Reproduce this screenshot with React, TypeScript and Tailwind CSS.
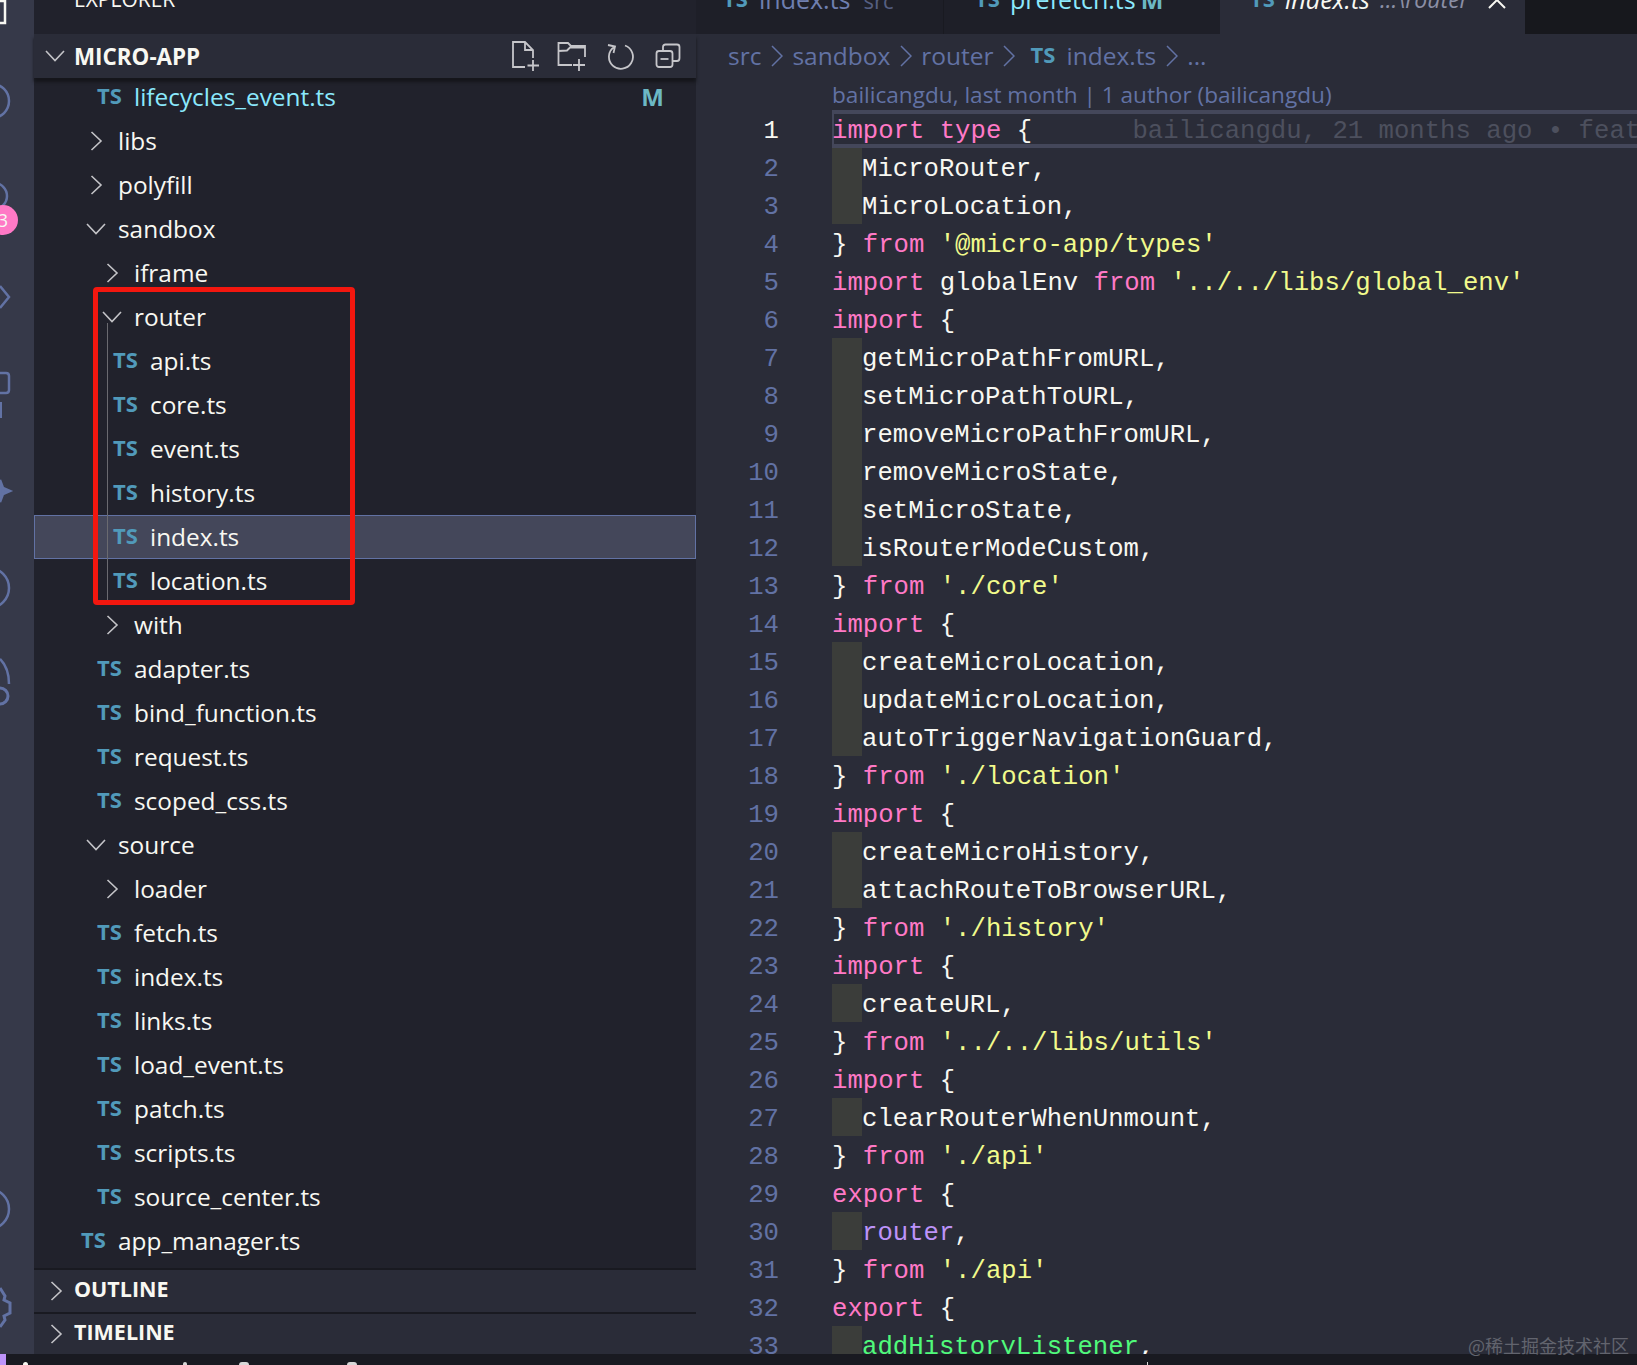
import React from 'react';

type TreeRow = {
  name: string;
  kind: 'file' | 'open' | 'closed';
  depth: number;
  modified?: boolean;
  selected?: boolean;
};

const tree: TreeRow[] = [
  { name: 'lifecycles_event.ts', kind: 'file', depth: 1, modified: true },
  { name: 'libs', kind: 'closed', depth: 0 },
  { name: 'polyfill', kind: 'closed', depth: 0 },
  { name: 'sandbox', kind: 'open', depth: 0 },
  { name: 'iframe', kind: 'closed', depth: 1 },
  { name: 'router', kind: 'open', depth: 1 },
  { name: 'api.ts', kind: 'file', depth: 2 },
  { name: 'core.ts', kind: 'file', depth: 2 },
  { name: 'event.ts', kind: 'file', depth: 2 },
  { name: 'history.ts', kind: 'file', depth: 2 },
  { name: 'index.ts', kind: 'file', depth: 2, selected: true },
  { name: 'location.ts', kind: 'file', depth: 2 },
  { name: 'with', kind: 'closed', depth: 1 },
  { name: 'adapter.ts', kind: 'file', depth: 1 },
  { name: 'bind_function.ts', kind: 'file', depth: 1 },
  { name: 'request.ts', kind: 'file', depth: 1 },
  { name: 'scoped_css.ts', kind: 'file', depth: 1 },
  { name: 'source', kind: 'open', depth: 0 },
  { name: 'loader', kind: 'closed', depth: 1 },
  { name: 'fetch.ts', kind: 'file', depth: 1 },
  { name: 'index.ts', kind: 'file', depth: 1 },
  { name: 'links.ts', kind: 'file', depth: 1 },
  { name: 'load_event.ts', kind: 'file', depth: 1 },
  { name: 'patch.ts', kind: 'file', depth: 1 },
  { name: 'scripts.ts', kind: 'file', depth: 1 },
  { name: 'source_center.ts', kind: 'file', depth: 1 },
  { name: 'app_manager.ts', kind: 'file', depth: 0 },
];

const code = [
  'import type {',
  '  MicroRouter,',
  '  MicroLocation,',
  "} from '@micro-app/types'",
  "import globalEnv from '../../libs/global_env'",
  'import {',
  '  getMicroPathFromURL,',
  '  setMicroPathToURL,',
  '  removeMicroPathFromURL,',
  '  removeMicroState,',
  '  setMicroState,',
  '  isRouterModeCustom,',
  "} from './core'",
  'import {',
  '  createMicroLocation,',
  '  updateMicroLocation,',
  '  autoTriggerNavigationGuard,',
  "} from './location'",
  'import {',
  '  createMicroHistory,',
  '  attachRouteToBrowserURL,',
  "} from './history'",
  'import {',
  '  createURL,',
  "} from '../../libs/utils'",
  'import {',
  '  clearRouterWhenUnmount,',
  "} from './api'",
  'export {',
  '  router,',
  "} from './api'",
  'export {',
  '  addHistoryListener,',
];

const fileIndent = ['pl-[47px]', 'pl-[63px]', 'pl-[79px]'];
const folderIndent = ['pl-[52px]', 'pl-[68px]', 'pl-[84px]'];

const TsBadge = ({ className = '' }: { className?: string }) => (
  <span className={`font-bold text-[#519aba] text-[22px] leading-none -translate-y-[2px] ${className}`}>TS</span>
);

const Chevron = ({ open, className = '' }: { open: boolean; className?: string }) => (
  <svg viewBox="0 0 20 20" className={`w-5 h-5 shrink-0 ${className}`} fill="none" stroke="#c4c4c8" strokeWidth="1.6">
    {open ? <path d="M1 5 L10 14.5 L19 5" /> : <path d="M5.5 1 L15 10 L5.5 19" />}
  </svg>
);

const Row = ({ row }: { row: TreeRow }) => {
  const base = 'h-[44px] flex items-center text-[24.4px] leading-none';
  if (row.kind === 'file') {
    return (
      <div
        className={`${base} ${fileIndent[row.depth]} ${
          row.selected ? 'bg-[#44475a] outline outline-1 -outline-offset-1 outline-[#6272a4]' : ''
        }`}
      >
        <TsBadge className="w-[37px] shrink-0" />
        <span className={row.modified ? 'text-[#8be9fd]' : 'text-[#f8f8f2]'}>{row.name}</span>
        {row.modified && <span className="ml-auto mr-[32px] font-bold text-[24px] text-[#6cb8c4]">M</span>}
      </div>
    );
  }
  return (
    <div className={`${base} ${folderIndent[row.depth]} text-[#f8f8f2]`}>
      <Chevron open={row.kind === 'open'} className="mr-[12px]" />
      <span>{row.name}</span>
    </div>
  );
};

const SectionHeader = ({ title, height, line }: { title: string; height: string; line?: boolean }) => (
  <div
    className={`${height} ${line ? 'border-t-2 border-[#191a21]' : ''} bg-[#2a2c38] flex items-center pl-[12px] shrink-0`}
  >
    <Chevron open={false} className="mr-[8px]" />
    <span className="font-bold text-[21.5px] text-[#f8f8f2] pb-[4px]">{title}</span>
  </div>
);

const ToolbarIcons = () => (
  <div className="ml-auto mr-[15px] flex items-center">
    <svg viewBox="0 0 30 30" className="w-[30px] h-[30px] mr-[16px]" fill="none" stroke="#c6c6ca" strokeWidth="1.8">
      <path d="M14 26 H2 V1 H14 L22 9 V17 M14 1 V9 H22" />
      <path d="M22 19 V30 M16.5 24.5 H28" />
    </svg>
    <svg viewBox="0 0 30 30" className="w-[30px] h-[30px] mr-[19px]" fill="none" stroke="#c6c6ca" strokeWidth="1.8">
      <path d="M15 24 H1.5 V2 H11 L14 5 H28 V16 M1.5 10 L10 9.5 L13 6.5 H28" />
      <path d="M22 18 V30 M16 24 H28" />
    </svg>
    <svg viewBox="0 0 28 28" className="w-[28px] h-[28px] mr-[21px]" fill="none" stroke="#c6c6ca" strokeWidth="1.8">
      <path d="M8 5 A12 12 0 1 0 19 3.5 M2 3 L9 4.5 L7.5 11" />
    </svg>
    <svg viewBox="0 0 26 26" className="w-[26px] h-[26px]" fill="none" stroke="#c6c6ca" strokeWidth="1.8">
      <rect x="1.5" y="8" width="16" height="16" rx="2.5" />
      <path d="M8 8 V4 Q8 1.5 10.5 1.5 H22 Q24.5 1.5 24.5 4 V15 Q24.5 18 22 18 H17.5" />
      <path d="M5.5 16 H13.5" />
    </svg>
  </div>
);

const Sidebar = () => (
  <div className="w-[662px] shrink-0 bg-[#21222c] flex flex-col relative">
    <div className="h-[34px] shrink-0 pl-[40px] overflow-hidden">
      <div className="text-[21px] leading-none text-[#f8f8f2] -mt-[11px]">EXPLORER</div>
    </div>
    <div className="h-[44px] shrink-0 bg-[#2a2c38] flex items-center pl-[11px] relative z-10 shadow-[0_4px_3px_#15161b]">
      <Chevron open className="mr-[9px]" />
      <span className="font-bold text-[22.4px] text-[#f8f8f2] pt-[2px]">MICRO-APP</span>
      <ToolbarIcons />
    </div>
    <div className="flex-1 overflow-hidden relative">
      <div className="-mt-[3px]">
        {tree.map((row, i) => (
          <Row key={i} row={row} />
        ))}
      </div>
      {/* tree guide for the router folder */}
      <div className="absolute left-[73px] top-[245px] h-[280px] w-px bg-[#6a6a70]" />
      {/* red annotation box */}
      <div className="absolute left-[59px] top-[209px] w-[262px] h-[318px] border-[5px] border-[#f3170f] rounded-[4px]" />
    </div>
    <SectionHeader title="OUTLINE" height="h-[44px]" line />
    <SectionHeader title="TIMELINE" height="h-[42px]" line />
  </div>
);

const Tab = ({ children, className }: { children: React.ReactNode; className: string }) => (
  <div className={`h-[34px] shrink-0 overflow-hidden text-[25px] leading-none whitespace-nowrap ${className}`}>
    <div className="-mt-[13px] flex items-center">{children}</div>
  </div>
);

const TabBar = () => (
  <div className="h-[34px] shrink-0 flex bg-[#17181d]">
    <Tab className="w-[248px] bg-[#1e1f28] border-r border-[#191a21] pl-[27px]">
      <TsBadge className="w-[36px]" />
      <span className="text-[#6f7fb0]">index.ts</span>
      <span className="ml-[13px] text-[22px] text-[#565f82]">src</span>
    </Tab>
    <Tab className="w-[276px] bg-[#1e1f28] pl-[31px]">
      <TsBadge className="w-[35px]" />
      <span className="text-[#8be9fd]">prefetch.ts</span>
      <span className="ml-[5px] font-bold text-[24px] text-[#6cb8c4]">M</span>
    </Tab>
    <Tab className="w-[305px] bg-[#2a2c38] pl-[30px] italic">
      <TsBadge className="w-[35px] not-italic" />
      <span className="text-[#f8f8f2]">index.ts</span>
      <span className="ml-[10px] text-[23px] text-[#8b8fa5]">...\router</span>
      <svg viewBox="0 0 18 18" className="w-[18px] h-[18px] ml-[19px]" fill="none" stroke="#f8f8f2" strokeWidth="2">
        <path d="M1 1 L17 17 M17 1 L1 17" />
      </svg>
    </Tab>
  </div>
);

const Crumb = () => (
  <svg viewBox="0 0 12 24" className="w-[12px] h-[24px] mx-[9.5px] shrink-0" fill="none" stroke="#6272a4" strokeWidth="1.5">
    <path d="M1 2 L11 12 L1 22" />
  </svg>
);

const Breadcrumbs = () => (
  <div className="h-[44px] shrink-0 flex items-center pl-[32px] text-[24.5px] text-[#6272a4] leading-none">
    <span>src</span>
    <Crumb />
    <span>sandbox</span>
    <Crumb />
    <span>router</span>
    <Crumb />
    <TsBadge className="ml-[6px] w-[36px]" />
    <span>index.ts</span>
    <Crumb />
    <span>...</span>
  </div>
);

const tokenClass = (tok: string, lineNo: number) => {
  if (tok === 'import' || tok === 'export' || tok === 'from' || tok === 'type') return 'text-[#ff79c6]';
  if (tok.startsWith("'")) return 'text-[#f1fa8c]';
  if (lineNo === 30 && tok === 'router') return 'text-[#bd93f9]';
  if (lineNo === 33 && tok === 'addHistoryListener') return 'text-[#50fa7b]';
  return 'text-[#f8f8f2]';
};

const CodeLine = ({ text, no }: { text: string; no: number }) => {
  const indented = text.startsWith('  ');
  const tokens = text.trim().split(/('[^']*'|\b(?:import|export|from|type|router|addHistoryListener)\b)/);
  const active = no === 1;
  return (
    <div className="h-[38px] flex items-center shrink-0">
      <div className={`w-[83px] pt-[5px] text-right shrink-0 ${active ? 'text-[#f8f8f2]' : 'text-[#6272a4]'}`}>{no}</div>
      <div
        className={`ml-[53px] flex-1 h-full flex items-center whitespace-pre ${
          active ? 'border-y-[4px] border-[#44475a] shadow-[inset_2px_0_0_#44475a]' : ''
        }`}
      >
        {indented && <span className="w-[30px] h-full bg-[#3b3d3a] shrink-0" />}
        <span className="pt-[5px]">
          {tokens.map((tok, i) => (
            <span key={i} className={tokenClass(tok, no)}>
              {tok}
            </span>
          ))}
          {active && <span className="ml-[8px] text-[#4d505e]">{'      bailicangdu, 21 months ago • feat'}</span>}
        </span>
      </div>
    </div>
  );
};

const Editor = () => (
  <div className="flex-1 min-w-0 flex flex-col bg-[#2a2c38] overflow-hidden">
    <TabBar />
    <Breadcrumbs />
    <div className="h-[32px] shrink-0 pl-[136px] pt-[2px] flex items-center text-[22.6px] leading-none text-[#6272a4] whitespace-nowrap">
      bailicangdu, last month | 1 author (bailicangdu)
    </div>
    <div className="flex-1 overflow-hidden font-['Liberation_Mono',monospace] text-[25.65px] leading-none">
      {code.map((text, i) => (
        <CodeLine key={i} text={text} no={i + 1} />
      ))}
    </div>
  </div>
);

// icons in the activity bar are cut off by the left edge of the screenshot
const ActivityBar = () => (
  <div className="w-[34px] shrink-0 bg-[#363949] relative overflow-hidden">
    <svg viewBox="0 0 34 1354" className="w-[34px] h-[1354px]" fill="none" stroke="#6272a4" strokeWidth="2.5">
      <path d="M0 1 H5 V23 H0" stroke="#f8f8f2" />
      <circle cx="-8" cy="101" r="17" />
      <circle cx="-6" cy="196" r="13" />
      <path d="M0 286 L9 297 L0 308" />
      <path d="M0 373 H6 Q9 373 9 376 V390 Q9 393 6 393 H0" />
      <path d="M1 402 V418" strokeWidth="2" />
      <path d="M0 480 L3 488 L10 491 L3 494 L0 502 Z" fill="#6272a4" />
      <circle cx="-11" cy="588" r="20" />
      <path d="M0 659 Q9 668 9 684" />
      <circle cx="0" cy="696" r="8" strokeWidth="3" />
      <circle cx="-11" cy="1209" r="20" />
      <path d="M0 1288 L5 1296 L4 1300 L10 1303 V1313 L4 1316 L5 1320 L0 1327" strokeWidth="3" />
    </svg>
    <div className="absolute -left-[12px] top-[205px] w-[30px] h-[30px] rounded-full bg-[#ff79c6] flex items-center justify-center text-[18px] text-[#f8f8f2]">
      3
    </div>
  </div>
);

const StatusBar = () => (
  <div className="h-[11px] shrink-0 bg-[#191a21] flex overflow-hidden">
    <div className="w-[6px] h-full bg-[#bd93f9]" />
    <div className="ml-[17px] mt-[8px] w-[5px] h-[3px] rounded-t-full bg-[#f8f8f2]" />
    <div className="ml-[155px] mt-[8px] w-[4px] h-[3px] rounded-t-full bg-[#d8d8d8]" />
    <div className="ml-[52px] mt-[8px] w-[10px] h-[3px] rounded-t-full bg-[#d8d8d8]" />
    <div className="ml-[98px] mt-[8px] w-[10px] h-[3px] rounded-t-full bg-[#d8d8d8]" />
    <div className="ml-[790px] mt-[8px] w-px h-[3px] bg-[#d8d8d8]" />
  </div>
);

export default function App() {
  return (
    <div className="w-[1637px] h-[1365px] flex flex-col overflow-hidden relative font-['Open_Sans','Noto_Sans',sans-serif]">
      <div className="flex-1 min-h-0 flex">
        <ActivityBar />
        <Sidebar />
        <Editor />
      </div>
      <StatusBar />
      <div className="absolute right-[8px] bottom-[11px] text-[18px] leading-none text-[#62646e] font-['Noto_Sans_CJK_SC',sans-serif]">
        @稀土掘金技术社区
      </div>
    </div>
  );
}
